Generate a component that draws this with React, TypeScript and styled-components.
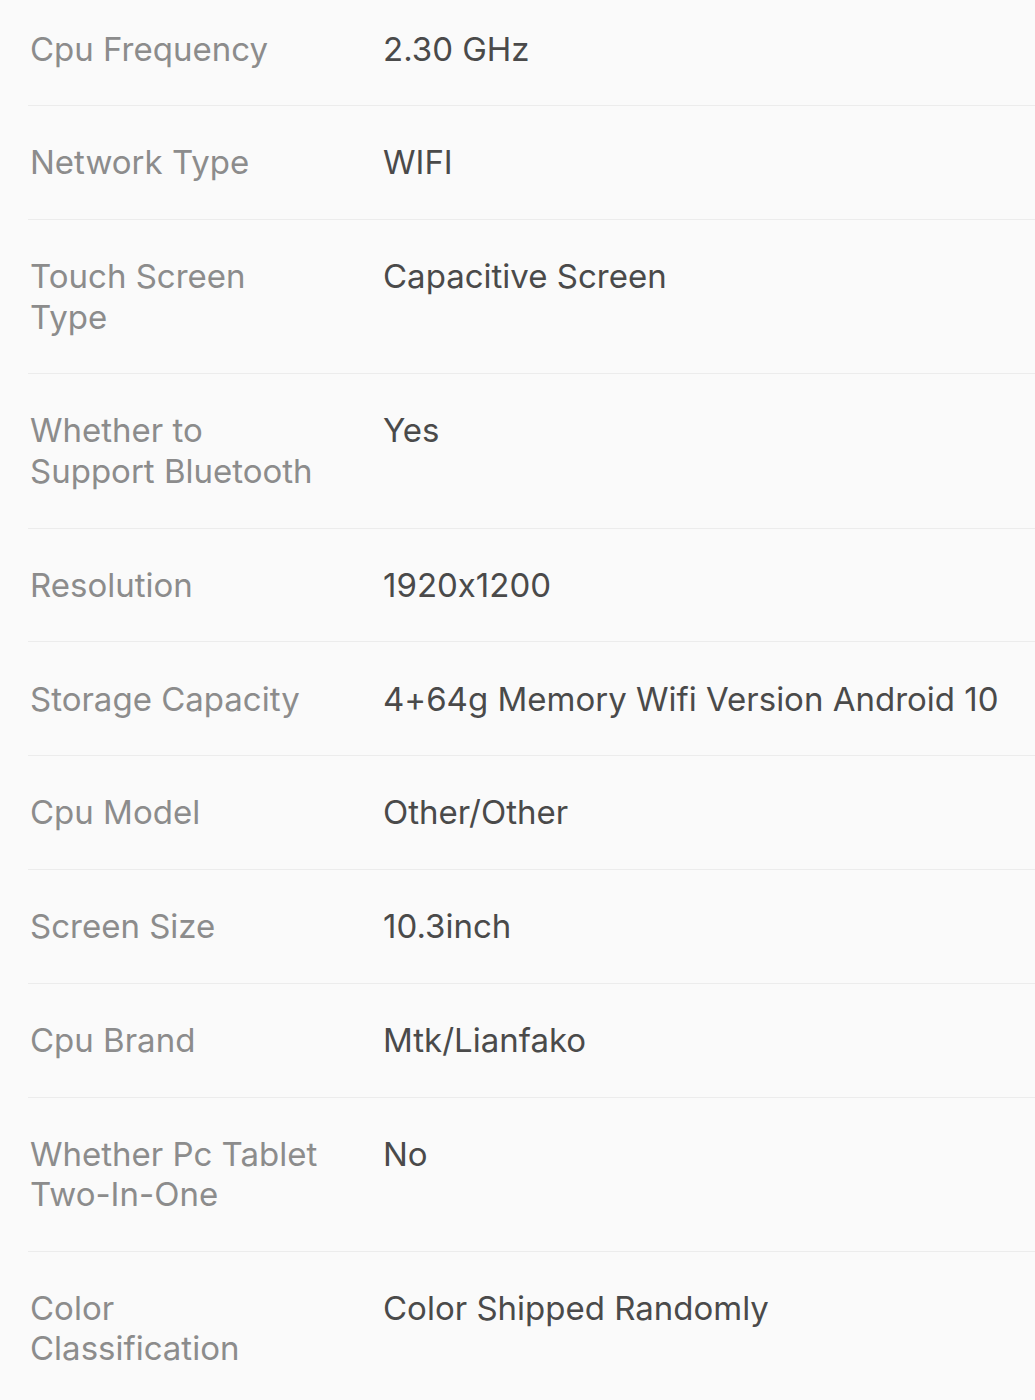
import React from "react";
import styled, { createGlobalStyle } from "styled-components";

const Global = createGlobalStyle`
  html, body {
    margin: 0;
    padding: 0;
    background: #fafafa;
  }
  body {
    font-family: Inter, "Open Sans", "Liberation Sans", sans-serif;
    font-feature-settings: "calt" 0;
    -webkit-font-smoothing: antialiased;
  }
`;

const List = styled.div`
  display: flex;
  flex-direction: column;
  margin-top: -7.5px;
  padding-left: 28px;
`;

const Row = styled.div`
  display: grid;
  grid-template-columns: 355px 1fr;
  padding: 36.15px 0;
  border-bottom: 1px solid #ececec;
  font-size: 33px;
  line-height: 40.5px;
`;

const Label = styled.div`
  color: #8c8c8c;
  max-width: 293px;
  padding-left: 2px;
`;

const Value = styled.div`
  color: #4a4a4a;
`;

const specs: [string, string][] = [
  ["Cpu Frequency", "2.30 GHz"],
  ["Network Type", "WIFI"],
  ["Touch Screen Type", "Capacitive Screen"],
  ["Whether to Support Bluetooth", "Yes"],
  ["Resolution", "1920x1200"],
  ["Storage Capacity", "4+64g Memory Wifi Version Android 10"],
  ["Cpu Model", "Other/Other"],
  ["Screen Size", "10.3inch"],
  ["Cpu Brand", "Mtk/Lianfako"],
  ["Whether Pc Tablet Two-In-One", "No"],
  ["Color Classification", "Color Shipped Randomly"],
];

export default function App() {
  return (
    <>
      <Global />
      <List>
        {specs.map(([k, v]) => (
          <Row key={k}>
            <Label>{k}</Label>
            <Value>{v}</Value>
          </Row>
        ))}
      </List>
    </>
  );
}
